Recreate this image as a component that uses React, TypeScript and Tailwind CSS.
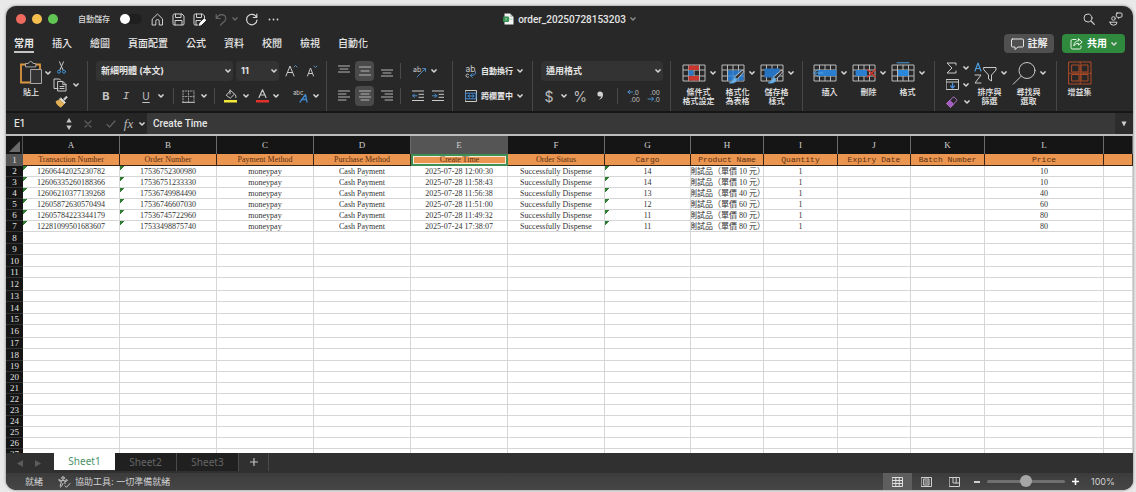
import React from "react";
import type { ReactNode } from "react";

/* ---------- small building blocks ---------- */

function Chevron({ className = "text-[#d6d6d6]" }: { className?: string }) {
  return (
    <svg viewBox="0 0 6 4" className={`h-1 w-1.5 shrink-0 ${className}`} fill="none" stroke="currentColor" strokeWidth="1.5" strokeLinecap="round" strokeLinejoin="round">
      <path d="M1 .9 3 3l2-2.100" />
    </svg>
  );
}

function Icon({ w, h, children, stroke = "#c9c9c9" }: { w: number; h: number; children: ReactNode; stroke?: string }) {
  return (
    <svg width={w} height={h} viewBox={`0 0 ${w} ${h}`} className="shrink-0" fill="none" stroke={stroke} strokeWidth="1" strokeLinecap="round" strokeLinejoin="round">
      {children}
    </svg>
  );
}

type ToolProps = { label: string; className?: string; size?: string; gap?: string; menu?: boolean; children: ReactNode };

function Tool({ label, className = "", size = "h-5", gap = "gap-1.5", menu = false, children }: ToolProps) {
  return (
    <button type="button" aria-label={label} className={`flex shrink-0 items-center justify-center ${size} ${gap} ${className}`}>
      {children}
      {menu && <Chevron />}
    </button>
  );
}

function Sep() {
  return <span className="h-4 w-px shrink-0 bg-[#4a4a4a]" />;
}

function Group({ className, children }: { className: string; children: ReactNode }) {
  return <div className={`flex h-[50px] shrink-0 border-r border-[#474747] ${className}`}>{children}</div>;
}

function Stack({ className = "", children }: { className?: string; children: ReactNode }) {
  return <div className={`flex flex-col gap-[5px] ${className}`}>{children}</div>;
}

function Big({ lines, icon, menu = true }: { lines: string[]; icon: ReactNode; menu?: boolean }) {
  return (
    <button type="button" className="flex w-[39px] shrink-0 flex-col items-center gap-[3px]">
      <span className="flex h-6 items-center gap-1">
        {icon}
        {menu && <Chevron />}
      </span>
      <span className="text-[8px] leading-[9px] font-medium whitespace-nowrap text-[#ececec]">
        {lines.map((l) => (
          <span key={l} className="block">{l}</span>
        ))}
      </span>
    </button>
  );
}

function Lines({ rows }: { rows: number[][] }) {
  return (
    <Icon w={12} h={14} stroke="#b5b5b5">
      {rows.map(([x1, x2, y]) => (
        <path key={y} d={`M${x1} ${y}H${x2}`} />
      ))}
    </Icon>
  );
}

/* ---------- title bar ---------- */

function TitleBar() {
  return (
    <header className="flex h-[26px] shrink-0 items-center px-2.5">
      <div className="flex flex-1 items-center">
        <div className="flex gap-1.5">
          <button type="button" aria-label="關閉" className="size-2.5 rounded-full bg-[#ed6a5e]" />
          <button type="button" aria-label="最小化" className="size-2.5 rounded-full bg-[#f5bf4f]" />
          <button type="button" aria-label="全螢幕" className="size-2.5 rounded-full bg-[#61c554]" />
        </div>
        <label className="ml-5 flex items-center gap-2.5 text-[8px] font-medium text-[#d8d8d8]">
          自動儲存
          <input type="checkbox" role="switch" className="h-2.5 w-[22px] appearance-none rounded-full bg-[#1f1f1f] before:block before:size-2.5 before:rounded-full before:bg-white" />
        </label>
        <div className="ml-[5px] flex items-center text-[#d0d0d0]">
          <Tool label="常用" className="w-[21px]">
            <Icon w={13} h={13} stroke="#d0d0d0"><path d="M1.500 5.800 6.500 1l5 4.800V12H8.200V8.200a1.700 1.700 0 0 0-3.400 0V12H1.500z" /></Icon>
          </Tool>
          <Tool label="儲存" className="w-[21px]">
            <Icon w={13} h={13} stroke="#d0d0d0"><path d="M1 2.200Q1 1 2.200 1H10l2 2v7.800q0 1.200-1.200 1.200H2.200Q1 12 1 10.800zM3.500 1v3.500h5.500V1M3 12V7.500h7V12" /></Icon>
          </Tool>
          <Tool label="另存新檔" className="w-[21px]">
            <Icon w={13} h={13} stroke="#d0d0d0"><path d="M5 12H2.200Q1 12 1 10.800V2.200Q1 1 2.200 1H9.500l2 2v2M3.500 1v3.500h5V1M3 12V7.500h4.500" /><path d="m6.500 12 .6-2.200 4.300-4 1.400 1.400-4.200 4.200z" fill="#fff" stroke="#fff" /></Icon>
          </Tool>
          <Tool label="復原" className="w-[22px]">
            <Icon w={12} h={13} stroke="#666"><path strokeWidth="1.200" d="M1.200 1.500v4h4M1.500 5.200C3 2.500 5.500 1.200 8 1.800c3 .8 3.800 4 1.800 6.200L5.500 12" /></Icon>
          </Tool>
          <Chevron className="text-[#666]" />
          <Tool label="重做" className="ml-0.5 w-[22px]">
            <Icon w={13} h={13} stroke="#d8d8d8"><path strokeWidth="1.200" d="M11.800 1v3.500H8.300M11.500 4.300A5.200 5.200 0 1 0 12 7" /></Icon>
          </Tool>
          <Tool label="更多" className="w-[22px]">
            <Icon w={11} h={3}><path stroke="#d8d8d8" strokeWidth="1.800" d="M1.500 1.500h0M5.500 1.500h0M9.500 1.500h0" /></Icon>
          </Tool>
        </div>
      </div>
      <h1 className="flex items-center gap-1 font-[Roboto,'Noto_Sans_CJK_TC',sans-serif] text-[10px] font-medium text-[#e4e4e4]">
        <Icon w={11} h={12}>
          <path d="M1.500.5H7l3.500 3.500v7.500h-9z" fill="#f4f4f4" stroke="none" />
          <path d="M7 .5 10.500 4H7z" fill="#b5c9ba" stroke="none" />
          <rect x="0" y="3.500" width="6" height="5.500" rx="1" fill="#2f8a4b" stroke="none" />
          <path d="M6 6.200h3M2 5l2 2.500M4 5 2 7.500" stroke="#8fd0a2" strokeWidth=".8" />
        </Icon>
        order_20250728153203
        <Chevron className="text-[#8a8a8a]" />
      </h1>
      <div className="flex flex-1 items-center justify-end gap-3">
        <Tool label="搜尋" className="w-4">
          <Icon w={12} h={12} stroke="#d0d0d0"><circle cx="5" cy="5" r="4" /><path d="m8 8 3.300 3.300" strokeWidth="1.200" /></Icon>
        </Tool>
        <Tool label="共用者" className="w-3.5">
          <Icon w={14} h={14} stroke="#d0d0d0"><circle cx="4.500" cy="6.500" r="1.800" /><path d="M1 10.200h7q0 3-3.500 3T1 10.200zM8 1h4q1 0 1 1v2.200q0 1-1 1h-1L9.500 6.500V5.200H8.300Q7.300 5.200 7.300 4.200V2q0-1 1-1z" /></Icon>
        </Tool>
      </div>
    </header>
  );
}

/* ---------- ribbon tabs ---------- */

const MENU = ["常用", "插入", "繪圖", "頁面配置", "公式", "資料", "校閱", "檢視", "自動化"];

function Menu() {
  return (
    <nav className="flex h-[25px] shrink-0 items-start justify-between px-2 pt-0.5">
      <div className="flex gap-[18px]">
        {MENU.map((m, i) => (
          <button key={m} type="button" className={`h-[19px] border-b-2 text-[10px] leading-4 whitespace-nowrap text-[#e6e6e6] ${i === 0 ? "border-[#c4c4c4] font-bold" : "border-transparent font-medium"}`}>
            {m}
          </button>
        ))}
      </div>
      <div className="flex gap-2">
        <button type="button" className="flex h-[19px] w-[50px] items-center justify-center gap-1 rounded bg-[#505050] text-[10px] font-bold whitespace-nowrap text-[#ececec]">
          <Icon w={13} h={12} stroke="#e2e2e2"><path d="M1.500 1h10q1 0 1 1v6q0 1-1 1H7l-3 2.500V9H1.500q-1 0-1-1V2q0-1 1-1z" /></Icon>
          註解
        </button>
        <button type="button" className="flex h-[19px] w-[63px] items-center justify-center gap-1 rounded bg-[#2f8a3d] text-[10px] font-bold whitespace-nowrap text-white">
          <Icon w={13} h={12} stroke="#e8f5ea"><path d="M6 1.500H2.500q-1.500 0-1.500 1.500v6.500Q1 11 2.500 11h7q1.500 0 1.500-1.500V8M8.500.8l3.700 3.200-3.700 3.200V5.300Q5 5.200 3.800 8 4 3 8.500 2.700z" /></Icon>
          共用
          <Chevron />
        </button>
      </div>
    </nav>
  );
}

/* ---------- ribbon drawings ---------- */

const PasteIcon = (
  <Icon w={24} h={24}>
    <path d="M7 3.500H2v18h10M17 3.500h4V8" stroke="#dc9640" strokeWidth="1.800" strokeLinecap="butt" strokeLinejoin="miter" />
    <path d="M6.500 5.500v-3h2.800q.7-2 2.400-2t2.300 2h2.800v3z" fill="#282828" stroke="#a8a8a8" />
    <path d="M12 8.500h10.500v14H12z" fill="#333" stroke="#a8a8a8" />
  </Icon>
);

function SheetGrid({ children }: { children?: ReactNode }) {
  return (
    <Icon w={24} h={22}>
      <path d="M1 3h22v16H1zM1 8h22M1 14h22M6.500 3v16M12 3v16M17.500 3v16" stroke="#b9b9b9" strokeLinecap="butt" />
      {children}
    </Icon>
  );
}

const Brush = (
  <>
    <path d="m21.500 8.500 1.500 1-7 8-2.500-2z" fill="#333" stroke="#c4c4c4" strokeWidth=".9" />
    <path d="M13.500 15.500q2.500.5 2.500 2.500-1.500 4-8 3 3-1 5.500-5.500z" fill="#6db2e6" stroke="#4f9fdb" strokeWidth=".6" />
  </>
);

const CondIcon = (
  <SheetGrid>
    <path d="M6.500 3.500H17V8H6.500zM6.500 14H17v4.500H6.500z" fill="#c8372f" stroke="none" />
    <path d="M6.500 8.500h5v5h-5z" fill="#2e77c4" stroke="none" />
  </SheetGrid>
);
const TableIcon = (
  <SheetGrid>
    <path d="M7 8.500h15.500v10H7z" fill="#2673c2" stroke="none" />
    <path d="M12 8v11M17.500 8v11M7 14h15" stroke="#5d9bd8" strokeWidth=".7" />
    {Brush}
  </SheetGrid>
);
const StyleIcon = (
  <SheetGrid>
    <path d="M4.500 6.500h15v9h-15z" fill="#2673c2" stroke="none" />
    {Brush}
  </SheetGrid>
);
const InsertIcon = (
  <SheetGrid>
    <path d="M5 8h18.500v6H5z" fill="#2a7fd0" stroke="none" />
    <path d="M5 7.500 1 11l4 3.500M1 11h9" stroke="#57a2e4" />
  </SheetGrid>
);
const DeleteIcon = (
  <SheetGrid>
    <path d="M3.500 8H15v6H3.500z" fill="#2a7fd0" stroke="none" />
    <path d="m15.500 7.500 8 7.500m0-7.500-8 7.500" stroke="#cc3a30" strokeWidth="1.500" />
  </SheetGrid>
);
const FormatIcon = (
  <SheetGrid>
    <path d="M7 8h10.500v6H7z" fill="#2a88dc" stroke="none" />
    <path d="M6 .8h12" stroke="#4b9de0" />
  </SheetGrid>
);
const SortIcon = (
  <Icon w={24} h={22}>
    <path d="m2 9 3-8 3 8M3 6.500h4" stroke="#4b9de0" strokeWidth="1.200" />
    <path d="M2 13h6l-6 8h6" stroke="#c9c9c9" />
    <path d="M11 5.500h12v2.500l-4.500 5v6l-3-2V13L11 8z" />
  </Icon>
);
const FindIcon = (
  <Icon w={24} h={24}>
    <circle cx="15" cy="9.500" r="8" />
    <path d="m9.200 15.200-8 8" />
  </Icon>
);
const AddinsIcon = (
  <Icon w={24} h={24} stroke="#b04a26">
    <path d="M1 1h22v22H1zM4 4h7v7H4zM13.500 4H20v7h-6.500zM4 13.500h7V20H4zM13.500 13.500H20V20h-6.500zM12.200 1v22M1 12.200h22" />
  </Icon>
);

/* ---------- ribbon ---------- */

const smallLabel = "text-[8px] font-bold whitespace-nowrap text-[#e6e6e6]";

function DropDown({ label, value, className }: { label: string; value: string; className: string }) {
  return (
    <span className={`relative flex h-5 shrink-0 items-center ${className}`}>
      <select aria-label={label} className="h-5 w-full appearance-none rounded-sm bg-[#333333] pl-[5px] text-[9px] font-bold text-[#e4e4e4]">
        <option>{value}</option>
      </select>
      <span className="pointer-events-none absolute right-0.5"><Chevron /></span>
    </span>
  );
}

function Ribbon() {
  return (
    <div className="flex h-14 shrink-0 overflow-hidden border-b-2 border-[#161616] pt-1">
      <Group className="w-[82px] pl-[13px]">
        <button type="button" className="flex w-[31px] flex-col gap-[3px]">
          <span className="flex h-6 items-center gap-0.5">{PasteIcon}<Chevron /></span>
          <span className="w-6 text-center text-[8px] leading-[9px] font-medium text-[#ececec]">貼上</span>
        </button>
        <div className="-mt-0.5 ml-0.5 flex flex-col">
          <Tool label="剪下" size="h-[17px]" className="w-[18px]">
            <Icon w={9} h={13}><path d="m2.500.8 3.700 8.400M6.500.8 2.800 9.200" /><circle cx="2" cy="10.700" r="1.500" stroke="#3f8fd0" /><circle cx="7" cy="10.700" r="1.500" stroke="#3f8fd0" /></Icon>
          </Tool>
          <Tool label="複製" menu size="h-[17px]" className="w-7">
            <Icon w={14} h={14}><path d="M5 10.500H1V1h5.500l1 1.200M5 3.500h5l3 3V13H5zM9.800 3.500v3.200H13M7 8.500h4M7 10.500h4" /></Icon>
          </Tool>
          <Tool label="複製格式" size="h-[17px]" className="w-[18px]">
            <Icon w={13} h={13}><path d="m8.500 4.200 2.800-3 1 1-2.800 3M6 3l4.500 4.500L9 8.800 4.600 4.500z" fill="#ddd" /><path d="M4.500 5 1 6.500q.5 3.500 5 5.700L8.800 9z" fill="#e0b057" stroke="#e0b057" /></Icon>
          </Tool>
        </div>
      </Group>

      <Group className="w-[239px] pl-2">
        <Stack>
          <div className="flex items-center gap-[3px]">
            <DropDown label="字型" value="新細明體 (本文)" className="w-[137px]" />
            <DropDown label="字型大小" value="11" className="w-[43px]" />
            <Tool label="放大字型" className="w-[18px]">
              <Icon w={13} h={12}><path d="m1 11 4-10 4 10M2.500 7.500h5" /><path d="m9 2 1.500-1.500L12 2" stroke="#5b8fc0" /></Icon>
            </Tool>
            <Tool label="縮小字型" className="w-[18px]">
              <Icon w={12} h={12}><path d="m1.500 11 3-8 3 8M2.600 8.500h3.800" /><path d="m8 1 1.500 1.500L11 1" stroke="#5b8fc0" /></Icon>
            </Tool>
          </div>
          <div className="flex items-center">
            <Tool label="粗體" className="w-5"><span className="text-[11px] font-bold text-[#c4c4c4]">B</span></Tool>
            <Tool label="斜體" className="w-5"><span className="font-['Liberation_Mono',monospace] text-[11px] text-[#c4c4c4] italic">I</span></Tool>
            <Tool label="底線" menu gap="gap-2" className="mr-[3px] w-[34px]"><span className="text-[10px] text-[#c4c4c4] underline underline-offset-2">U</span></Tool>
            <Sep />
            <Tool label="框線" menu className="w-10">
              <Icon w={13} h={13} stroke="#9c9c9c"><path d="M1 1h11v11M1 1v11M6.500 1v11M1 6.500h11" strokeDasharray="1 1.500" /><path d="M.5 12.300h12" stroke="#d0d0d0" /></Icon>
            </Tool>
            <Sep />
            <Tool label="填滿色彩" menu className="ml-1 w-[34px]">
              <Icon w={13} h={14}><path d="m2.500 6 4-4.500 4 3.500L6.500 9zM6 1v4M11 5.500q1.500 1.500 1 3" /><path d="M0 11h13v2.500H0z" fill="#f4e83a" stroke="none" /></Icon>
            </Tool>
            <Tool label="字型色彩" menu gap="gap-1" className="w-7">
              <Icon w={13} h={14}><path d="M3 8.500 6.500.8 10 8.500M4.200 6h4.600" strokeWidth="1.200" /><path d="M0 11h13v2.500H0z" fill="#e0312b" stroke="none" /></Icon>
            </Tool>
            <span className="ml-1"><Sep /></span>
            <Tool label="注音標示" menu gap="gap-1" className="ml-1 w-[34px]">
              <Icon w={16} h={13}>
                <text x="0" y="5" fontSize="6" fill="#c9c9c9" stroke="none">abc</text>
                <path d="m7 12 5.500-7.500L14 12M9 9.500h4.500" stroke="#3f87c8" strokeWidth="1.300" />
              </Icon>
            </Tool>
          </div>
        </Stack>
      </Group>

      <Group className="w-[126px] pl-2">
        <Stack>
          <div className="flex items-center gap-[2px]">
            <Tool label="靠上對齊" className="w-[18px]"><Lines rows={[[0, 12, 2], [2, 10, 5], [0, 12, 8]]} /></Tool>
            <Tool label="置中對齊" className="w-[19px] rounded-sm bg-[#4a4a4a]"><Lines rows={[[0, 12, 3], [2, 10, 7], [0, 12, 11]]} /></Tool>
            <Tool label="靠下對齊" className="w-[22px]"><Lines rows={[[0, 12, 6], [2, 10, 9], [0, 12, 12]]} /></Tool>
            <Sep />
            <Tool label="方向" menu gap="gap-1" className="ml-1.5 w-8">
              <Icon w={14} h={13}><text x="0" y="7" fontSize="7" fill="#c9c9c9" stroke="none">ab</text><path d="m4 12 8.500-8.500M9.500 3.500h3v3" stroke="#4a86bb" /></Icon>
            </Tool>
          </div>
          <div className="flex items-center gap-[2px]">
            <Tool label="靠左對齊" className="w-[18px]"><Lines rows={[[0, 12, 2], [0, 8, 5], [0, 12, 8], [0, 8, 11]]} /></Tool>
            <Tool label="水平置中" className="w-[19px] rounded-sm bg-[#4a4a4a]"><Lines rows={[[0, 12, 2], [2, 10, 5], [0, 12, 8], [2, 10, 11]]} /></Tool>
            <Tool label="靠右對齊" className="w-[22px]"><Lines rows={[[0, 12, 2], [4, 12, 5], [0, 12, 8], [4, 12, 11]]} /></Tool>
            <Sep />
            <Tool label="減少縮排" className="ml-1.5 w-[18px]">
              <Icon w={12} h={14}><path d="M0 2h12M7 5.300h5M7 8.300h5M0 11.500h12" /><path d="M5 6.800H.8M2.500 5 .8 6.800l1.700 1.800" stroke="#4a8fd0" /></Icon>
            </Tool>
            <Tool label="增加縮排" className="w-[18px]">
              <Icon w={12} h={14}><path d="M0 2h12M7 5.300h5M7 8.300h5M0 11.500h12" /><path d="M.5 6.800h4.300M3 5l1.800 1.800L3 8.600" stroke="#4a8fd0" /></Icon>
            </Tool>
          </div>
        </Stack>
      </Group>

      <Group className="w-20 pl-3">
        <Stack>
          <button type="button" className="flex h-5 items-center gap-1">
            <Icon w={12} h={13}><text x="0.500" y="6.500" fontSize="8.500" fill="#c9c9c9" stroke="none">ab</text><path d="M10.500 6.500q1.500 4-5 4M7.300 8.500l-2 2 2 2" stroke="#4a8fd0" /><path d="M3.500 9.300A1.600 1.600 0 1 0 3.500 12" /></Icon>
            <span className={smallLabel}>自動換行</span>
            <Chevron />
          </button>
          <button type="button" className="flex h-5 items-center gap-1">
            <Icon w={12} h={12}><path d="M.5.500h11v11H.5z" /><path d="M1 3.200h10v5.600H1z" stroke="#3f8fdc" /><path d="M3 6h6M4.300 4.700 3 6l1.300 1.300M7.700 4.700 9 6 7.700 7.300" stroke="#3f8fdc" /></Icon>
            <span className={smallLabel}>跨欄置中</span>
            <Chevron />
          </button>
        </Stack>
      </Group>

      <Group className="w-[138px] pl-2">
        <Stack>
          <DropDown label="數值格式" value="通用格式" className="w-[122px]" />
          <div className="flex items-center text-[#bdbdbd]">
            <Tool label="會計數字格式" menu gap="gap-2" className="w-[30px]"><span className="text-[14px]">$</span></Tool>
            <Tool label="百分比" className="w-[18px]"><span className="text-[14px]">%</span></Tool>
            <Tool label="千分位" className="mr-[6px] w-[22px]">
              <Icon w={7} h={10}><path d="M3 .5a2.500 2.500 0 0 0-.3 5q1 .3 1.600-.2Q4 7.500 1.800 9q4.400-1.300 4.200-5.700Q5.700.5 3 .5z" fill="#d0d0d0" stroke="none" /></Icon>
            </Tool>
            <Sep />
            <Tool label="增加小數位數" className="ml-[5px] w-[21px]">
              <Icon w={14} h={14}><text x="6" y="6" fontSize="6.500" fill="#c0c0c0" stroke="none">.0</text><text x="3" y="13" fontSize="6.500" fill="#c0c0c0" stroke="none">.00</text><path d="M5.500 3H1M2.800 1.200 1 3l1.800 1.800" stroke="#4a8fd0" /></Icon>
            </Tool>
            <Tool label="減少小數位數" className="w-5">
              <Icon w={14} h={14}><text x="3" y="6" fontSize="6.500" fill="#c0c0c0" stroke="none">.00</text><text x="7" y="13" fontSize="6.500" fill="#c0c0c0" stroke="none">.0</text><path d="M1 10h5.500M4.700 8.200 6.500 10l-1.800 1.800" stroke="#4a8fd0" /></Icon>
            </Tool>
          </div>
        </Stack>
      </Group>

      <Group className="w-[132px] pl-2">
        <Big lines={["條件式", "格式設定"]} icon={CondIcon} />
        <Big lines={["格式化", "為表格"]} icon={TableIcon} />
        <Big lines={["儲存格", "樣式"]} icon={StyleIcon} />
      </Group>

      <Group className="w-[132px] pl-[7px]">
        <Big lines={["插入"]} icon={InsertIcon} />
        <Big lines={["刪除"]} icon={DeleteIcon} />
        <Big lines={["格式"]} icon={FormatIcon} />
      </Group>

      <Group className="w-[122px] pl-2.5">
        <div className="-mt-0.5 flex w-[25px] flex-col">
          <Tool label="自動加總" menu size="h-[17px]">
            <Icon w={11} h={12}><path d="M10 3V1H1l5 5-5 5h9V9" /></Icon>
          </Tool>
          <Tool label="填滿" menu size="h-[17px]" gap="gap-1">
            <Icon w={13} h={11}><path d="M.5.500h12v10H.5zM.5 3h12" /><path d="M6.500 4v5M4.500 7l2 2 2-2" stroke="#4a8fe0" strokeWidth="1.200" /></Icon>
          </Tool>
          <Tool label="清除" menu size="h-[17px]">
            <Icon w={12} h={12} stroke="#b873d0"><path d="m1 7.500 6-6.300q.7-.5 1.300 0l2.300 2.300q.5.700 0 1.300L4.800 11z" /><path d="m1 7.500 2.800-3 3.700 3.500L4.800 11z" fill="#a559c4" /></Icon>
          </Tool>
        </div>
        <Big lines={["排序與", "篩選"]} icon={SortIcon} />
        <Big lines={["尋找與", "選取"]} icon={FindIcon} />
      </Group>
      <div className="pl-[3px]">
        <Big lines={["增益集"]} icon={AddinsIcon} menu={false} />
      </div>
    </div>
  );
}

/* ---------- formula bar ---------- */

function FormulaBar() {
  return (
    <div className="flex h-[23px] shrink-0 items-center border-b-2 border-[#bdbdbd] bg-[#262626]">
      <input aria-label="名稱方塊" defaultValue="E1" className="w-[60px] bg-transparent pl-2 text-[10px] font-medium text-[#e4e4e4]" />
      <Icon w={6} h={14}><path d="M3 1 5.700 5.500H.3zM3 13 .3 8.500h5.400z" fill="#c4c4c4" stroke="none" /></Icon>
      <Tool label="取消" className="ml-1 w-6"><Icon w={8} h={8} stroke="#606060"><path d="m1 1 6 6M7 1 1 7" strokeWidth="1.200" /></Icon></Tool>
      <Tool label="輸入" className="w-[22px]"><Icon w={10} h={8} stroke="#606060"><path d="m1 4.500 2.500 2.500L9 1" strokeWidth="1.200" /></Icon></Tool>
      <Tool label="插入函數" menu className="w-[25px]">
        <span className="font-['Liberation_Serif',serif] text-[13px] leading-4 text-[#bdbdbd] italic">fx</span>
      </Tool>
      <input aria-label="資料編輯列" defaultValue="Create Time" className="h-full min-w-0 flex-1 bg-[#383838] pl-1.5 font-[Roboto,'Noto_Sans_CJK_TC',sans-serif] text-[10px] font-medium text-[#e6e6e6]" />
      <button type="button" aria-label="展開資料編輯列" className="flex h-full w-[18px] items-center justify-center bg-[#2c2c2c]">
        <Icon w={6} h={6}><path d="M.5.500h5L3 5.500z" fill="#d0d0d0" stroke="none" /></Icon>
      </button>
    </div>
  );
}

/* ---------- grid ---------- */

type Column = { letter: string; width: string; title: string };

const COLUMNS: Column[] = [
  { letter: "A", width: "w-[97px]", title: "Transaction Number" },
  { letter: "B", width: "w-[97px]", title: "Order Number" },
  { letter: "C", width: "w-[97px]", title: "Payment Method" },
  { letter: "D", width: "w-[97px]", title: "Purchase Method" },
  { letter: "E", width: "w-[97px]", title: "Create Time" },
  { letter: "F", width: "w-[97px]", title: "Order Status" },
  { letter: "G", width: "w-[86px]", title: "Cargo" },
  { letter: "H", width: "w-[73px]", title: "Product Name" },
  { letter: "I", width: "w-[74px]", title: "Quantity" },
  { letter: "J", width: "w-[73px]", title: "Expiry Date" },
  { letter: "K", width: "w-[74px]", title: "Batch Number" },
  { letter: "L", width: "w-[119px]", title: "Price" },
  { letter: "", width: "", title: "" },
];

const ORDERS = [
  ["12606442025230782", "17536752300980", "2025-07-28 12:00:30", "14", "10"],
  ["12606335260188366", "17536751233330", "2025-07-28 11:58:43", "14", "10"],
  ["12606210377139268", "17536749984490", "2025-07-28 11:56:38", "13", "40"],
  ["12605872630570494", "17536746607030", "2025-07-28 11:51:00", "12", "60"],
  ["12605784223344179", "17536745722960", "2025-07-28 11:49:32", "11", "80"],
  ["12281099501683607", "17533498875740", "2025-07-24 17:38:07", "11", "80"],
];

const DATA = ORDERS.map(([id, order, time, cargo, price]) => [
  id, order, "moneypay", "Cash Payment", time, "Successfully Dispense", cargo,
  `測試品（單價 ${price} 元）`, "1", "", "", price, "",
]);

const LAST_ROW = 27;
const TEXT_COLUMNS = [0, 1, 6];
const MEDIUM_ROWS = [8, 10, 14, 18];
const TALL_ROWS = [12, 16];

function rowHeight(n: number) {
  if (TALL_ROWS.includes(n)) return "h-[13px]";
  if (MEDIUM_ROWS.includes(n)) return "h-3";
  return "h-[11px]";
}

function headerBorder(i: number) {
  if (i === 4) return "border-2 border-[#3f8f55] shadow-[inset_0_0_0_1px_#f6ead8]";
  return "border-r border-b border-[#3a2413]";
}

function Grid() {
  return (
    <div className="min-h-0 flex-1 overflow-hidden bg-white font-['Liberation_Serif','Noto_Sans_CJK_TC',serif]">
      <table className="w-full table-fixed border-separate border-spacing-0 text-center text-[8px] leading-[10px] text-[#333]">
        <colgroup>
          <col className="w-[17px]" />
          {COLUMNS.map((c, i) => <col key={i} className={c.width} />)}
        </colgroup>
        <thead>
          <tr className="h-[18px] bg-[#151515] text-[9px] text-[#cfcfcf]">
            <td className="border-r border-[#555] p-0 align-bottom">
              <svg viewBox="0 0 16 17" className="block h-[17px] w-4" fill="#6a6a6a"><path d="M14 4v11H3z" /></svg>
            </td>
            {COLUMNS.map((c, i) => (
              <th key={i} scope="col" className={`border-r p-0 font-normal ${i === 4 ? "border-[#555] bg-[#555]" : "border-[#6a6a6a]"}`}>{c.letter}</th>
            ))}
          </tr>
        </thead>
        <tbody>
          <tr className="h-3 bg-[#ea9550] text-[#5a2f10]">
            <th scope="row" className="bg-[#555] p-0 text-[9px] font-normal text-[#e0e0e0]">1</th>
            {COLUMNS.map((c, i) => (
              <td key={i} className={`p-0 whitespace-nowrap ${i < 6 ? "" : "font-['Liberation_Mono',monospace]"} ${headerBorder(i)}`}>
                <div className="-my-0.5">{c.title}</div>
              </td>
            ))}
          </tr>
          {Array.from({ length: LAST_ROW - 1 }, (_, k) => k + 2).map((n) => (
            <tr key={n} className={rowHeight(n)}>
              <th scope="row" className="border-b border-[#333] bg-[#151515] p-0 text-[9px] font-normal text-[#e0e0e0]">{n}</th>
              {COLUMNS.map((_, i) => (
                <td
                  key={i}
                  className={`overflow-hidden border-r border-b border-[#d6d6d6] p-0 whitespace-nowrap ${n < 8 && TEXT_COLUMNS.includes(i) ? "bg-[linear-gradient(135deg,#2f7d32_0_3px,transparent_3px)]" : ""}`}
                >
                  {n < 8 && <div className="flex h-2.5 justify-center leading-3">{DATA[n - 2][i]}</div>}
                </td>
              ))}
            </tr>
          ))}
        </tbody>
      </table>
    </div>
  );
}

/* ---------- sheet tabs and status bar ---------- */

function SheetTabs() {
  return (
    <div className="flex h-5 shrink-0 items-start bg-[#303030] font-['Noto_Sans',sans-serif] text-[10px]">
      <button type="button" aria-label="上一張" className="flex h-5 w-[25px] items-center justify-end pr-2">
        <Icon w={6} h={7}><path d="M6 0v7L0 3.500z" fill="#5c5c5c" stroke="none" /></Icon>
      </button>
      <button type="button" aria-label="下一張" className="flex h-5 w-[23px] items-center pl-1">
        <Icon w={6} h={7}><path d="M0 0v7l6-3.500z" fill="#5c5c5c" stroke="none" /></Icon>
      </button>
      <button type="button" className="h-[17px] w-[61px] bg-white text-[#4b9366]">Sheet1</button>
      <button type="button" className="h-[18px] w-[62px] border-r border-[#4a4a4a] bg-[#202020] text-[#666]">Sheet2</button>
      <button type="button" className="h-[18px] w-[62px] border-r border-[#4a4a4a] bg-[#202020] text-[#666]">Sheet3</button>
      <button type="button" aria-label="新增工作表" className="flex h-[18px] w-[30px] items-center justify-center border-r border-[#4a4a4a]">
        <Icon w={8} h={8} stroke="#c4c4c4"><path d="M4 .5v7M.5 4h7" strokeWidth="1.200" /></Icon>
      </button>
    </div>
  );
}

function StatusBar() {
  return (
    <footer className="flex h-[17px] shrink-0 items-center justify-between bg-linear-to-b from-[#3c3c3c] to-[#464646] pl-[19px] text-[9px] text-[#d0d0d0]">
      <div className="flex items-center">
        <span>就緒</span>
        <button type="button" className="ml-[15px] flex items-center gap-1">
          <Icon w={13} h={12}><circle cx="5" cy="2" r="1.300" /><path d="M1 3.800q-.5 1 .8 1.200L3.500 5.500 2 10.500q.5 1 1.300 0L5 7.500M1 3.800l2.500.8h3L9 3.600q1 .7 0 1.400L6.700 5.600l.3 2M7 9.800l1.500 1.500L12 7.500" /></Icon>
          協助工具: 一切準備就緒
        </button>
      </div>
      <div className="flex h-full items-center">
        <button type="button" aria-label="標準模式" className="flex h-full w-[29px] items-center justify-center bg-[#5e5e5e]">
          <Icon w={11} h={10} stroke="#e0e0e0"><path d="M.5.500h10v9H.5zM.5 3.500h10M.5 6.500h10M3.800.5v9M7.200.5v9" /></Icon>
        </button>
        <button type="button" aria-label="整頁模式" className="flex h-full w-[28px] items-center justify-center">
          <Icon w={11} h={10} stroke="#d0d0d0"><path d="M.5.500h10v9H.5zM3 2h5v6H3zM4 4h3M4 6h3" /></Icon>
        </button>
        <button type="button" aria-label="分頁預覽" className="flex h-full w-[28px] items-center justify-center">
          <Icon w={11} h={10} stroke="#d0d0d0"><path d="M.5.500h10v9H.5zM4 .5V6h6.500M7.200.5V6" /></Icon>
        </button>
        <button type="button" aria-label="縮小" className="flex w-[18px] items-center justify-center">
          <Icon w={6} h={2}><path d="M0 1h6" stroke="#fff" strokeWidth="1.600" /></Icon>
        </button>
        <input
          type="range"
          aria-label="縮放比例"
          defaultValue={50}
          className="mx-px h-3 w-[78px] appearance-none bg-transparent [&::-webkit-slider-runnable-track]:h-[3px] [&::-webkit-slider-runnable-track]:rounded-full [&::-webkit-slider-runnable-track]:bg-[#707070] [&::-webkit-slider-thumb]:-mt-[5px] [&::-webkit-slider-thumb]:size-3 [&::-webkit-slider-thumb]:appearance-none [&::-webkit-slider-thumb]:rounded-full [&::-webkit-slider-thumb]:bg-[#a6a6a6]"
        />
        <button type="button" aria-label="放大" className="flex w-[18px] items-center justify-center">
          <Icon w={7} h={7}><path d="M3.500.5v6M.5 3.500h6" stroke="#fff" strokeWidth="1.600" /></Icon>
        </button>
        <span className="w-[49px] pl-[7px] font-[Inter,sans-serif]">100%</span>
      </div>
    </footer>
  );
}

export default function App() {
  return (
    <div className="flex h-screen flex-col bg-[#e9e9e9] pt-1.5 pr-[3px] pb-0.5 pl-1.5 font-[Inter,'Noto_Sans_CJK_TC',sans-serif]">
      <main className="flex min-h-0 flex-1 flex-col overflow-hidden rounded-[10px] bg-[#282828] shadow-[0_0_3px_rgba(0,0,0,0.5)]">
        <TitleBar />
        <Menu />
        <Ribbon />
        <FormulaBar />
        <Grid />
        <SheetTabs />
        <StatusBar />
      </main>
    </div>
  );
}
